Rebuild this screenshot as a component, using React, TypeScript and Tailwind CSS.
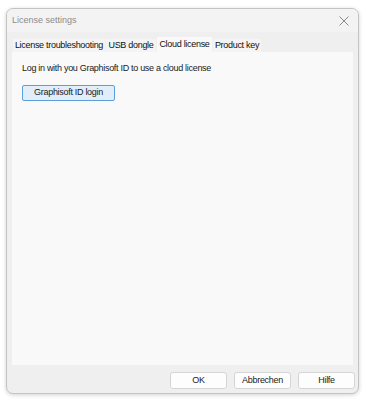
const font = { fontFamily: '"Liberation Sans", Arial, sans-serif' };

function Tab({ label, active, width }: { label: string; active?: boolean; width: string }) {
  return (
    <div
      className={
        (active
          ? "flex h-[15px] items-center justify-center bg-[#f9f9f9] text-[#111] "
          : "mt-[2px] flex h-[13px] items-center justify-center bg-[#f4f4f4] text-[#111] ") + width
      }
    >
      {label}
    </div>
  );
}

function DlgButton({ children }: { children: string }) {
  return (
    <div className="flex h-[17px] w-[57px] items-center justify-center rounded-[3px] border border-[#d5d5d5] bg-[#fdfdfd] text-[#1a1a1a]">
      {children}
    </div>
  );
}

export default function App() {
  return (
    <div className="h-[400px] w-[366px] bg-white pl-[6px] pt-[8px] text-[9px] tracking-[-0.3px]" style={font}>
      <div className="flex h-[386px] w-[353px] flex-col overflow-hidden rounded-[7px] border border-[#c4c4c4] bg-[#efefef] shadow-[0_1px_4px_rgba(0,0,0,0.18)]">
        <div className="flex h-[23px] items-center justify-between bg-[#f3f3f3] pl-[5px] pr-[8px]">
          <span className="text-[9px] tracking-normal text-[#8c8c8c]">License settings</span>
          <svg width="10" height="10" viewBox="0 0 10 10" className="mr-[1px]">
            <path d="M0.5 0.5 L9.5 9.5 M9.5 0.5 L0.5 9.5" stroke="#8a8a8a" strokeWidth="1" />
          </svg>
        </div>
        <div className="flex flex-1 flex-col px-[5px]">
          <div className="mt-[5px] flex items-start gap-[1px] pl-[1px]">
            <Tab label="License troubleshooting" width="w-[92px]" />
            <Tab label="USB dongle" width="w-[50px]" />
            <Tab label="Cloud license" active width="w-[55px]" />
            <Tab label="Product key" width="w-[48px]" />
          </div>
          <div className="flex h-[313px] flex-col bg-[#f9f9f9] px-[10px] pt-[10px]">
            <div className="text-[#1a1a1a]">Log in with you Graphisoft ID to use a cloud license</div>
            <div className="mt-[9px] flex h-[16px] w-[93px] items-center justify-center rounded-[2px] border border-[#5a9fdc] bg-[#e1eefa] text-[#1a1a1a]">
              Graphisoft ID login
            </div>
          </div>
          <div className="-mr-[2px] mt-[7px] flex justify-end gap-[7px]">
            <DlgButton>OK</DlgButton>
            <DlgButton>Abbrechen</DlgButton>
            <DlgButton>Hilfe</DlgButton>
          </div>
        </div>
      </div>
    </div>
  );
}
